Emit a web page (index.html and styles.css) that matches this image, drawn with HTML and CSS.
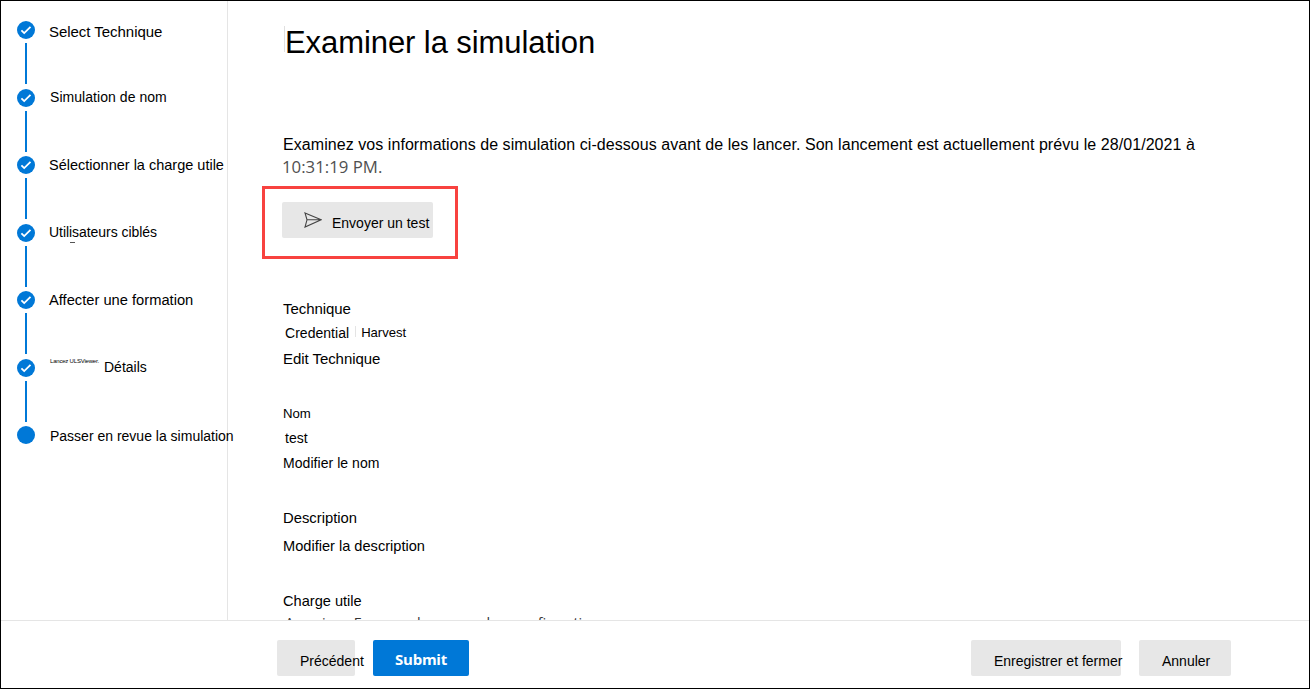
FILE: index.html
```html
<!DOCTYPE html>
<html lang="fr">
<head>
<meta charset="utf-8">
<title>Examiner la simulation</title>
<link rel="stylesheet" href="styles.css">
</head>
<body>
<div class="window">
  <div class="body">
    <nav class="steps">
      <div class="step"><svg class="mark" viewBox="0 0 18 18"><circle cx="9" cy="9" r="9"/><path d="M4.4 9.3l2.8 2.8 6.3-6.2"/></svg><span class="label s1">Select Technique</span></div>
      <div class="step"><svg class="mark" viewBox="0 0 18 18"><circle cx="9" cy="9" r="9"/><path d="M4.4 9.3l2.8 2.8 6.3-6.2"/></svg><span class="label s2">Simulation de nom</span></div>
      <div class="step"><svg class="mark" viewBox="0 0 18 18"><circle cx="9" cy="9" r="9"/><path d="M4.4 9.3l2.8 2.8 6.3-6.2"/></svg><span class="label s3">Sélectionner la charge utile</span></div>
      <div class="step"><svg class="mark" viewBox="0 0 18 18"><circle cx="9" cy="9" r="9"/><path d="M4.4 9.3l2.8 2.8 6.3-6.2"/></svg><span class="label s4">Utilisateurs ciblés</span><i class="dash"></i></div>
      <div class="step"><svg class="mark" viewBox="0 0 18 18"><circle cx="9" cy="9" r="9"/><path d="M4.4 9.3l2.8 2.8 6.3-6.2"/></svg><span class="label s5">Affecter une formation</span></div>
      <div class="step"><svg class="mark" viewBox="0 0 18 18"><circle cx="9" cy="9" r="9"/><path d="M4.4 9.3l2.8 2.8 6.3-6.2"/></svg><span class="tiny">Lancez ULSViewer.</span><span class="label s6">Détails</span></div>
      <div class="step last"><svg class="mark" viewBox="0 0 18 18"><circle cx="9" cy="9" r="9"/></svg><span class="label s7">Passer en revue la simulation</span></div>
    </nav>
    <main class="content">
      <h1 class="title"><span>Examiner la simulation</span></h1>
      <p class="intro"><span class="intro-main">Examinez vos informations de simulation ci-dessous avant de les lancer. Son lancement est actuellement prévu le 28/01/2021 à</span></p>
      <p class="time"><span>10:31:19 PM.</span></p>
      <div class="highlight">
        <button class="btn send"><svg class="plane" viewBox="0 0 18 16"><path d="M1 .9L17.2 7.8 1 15.1 3 7.8zM3 7.8h14"/></svg><span>Envoyer un test</span></button>
      </div>
      <section class="group technique">
        <div class="row r1"><span>Technique</span></div>
        <div class="row r2"><span class="cred">Credential</span><i class="sep"></i><span class="harv">Harvest</span></div>
        <div class="row r3"><span>Edit Technique</span></div>
      </section>
      <section class="group name">
        <div class="row r4"><span>Nom</span></div>
        <div class="row r5"><span>test</span></div>
        <div class="row r6"><span>Modifier le nom</span></div>
      </section>
      <section class="group desc">
        <div class="row r7"><span>Description</span></div>
        <div class="row r8"><span>Modifier la description</span></div>
      </section>
      <section class="group payload">
        <div class="row r9"><span>Charge utile</span></div>
        <div class="row r10"><span class="w0">American Express</span><span class="w1">base</span><span class="w2">number</span><span class="w3">confirmation</span></div>
      </section>
    </main>
  </div>
  <footer class="footer">
    <button class="btn prev"><span>Précédent</span></button>
    <button class="btn submit"><span>Submit</span></button>
    <button class="btn save"><span>Enregistrer et fermer</span></button>
    <button class="btn cancel"><span>Annuler</span></button>
  </footer>
</div>
</body>
</html>
```
FILE: styles.css
```css
* { box-sizing: border-box; }
body { margin: 0; background: #fff; color: #000; font-family: "Liberation Sans", Arial, sans-serif; font-size: 14px; }
h1, p { margin: 0; font-weight: normal; }
span { white-space: nowrap; }
.window { width: 1310px; height: 689px; border: 1px solid #000; display: flex; flex-direction: column; overflow: hidden; }
.body { display: flex; height: 619px; flex: none; overflow: hidden; }

.steps { width: 227px; flex: none; border-right: 1px solid #e5e5e5; padding: 20px 0 0 16px; }
.step { position: relative; height: 67.5px; display: flex; align-items: flex-start; background: linear-gradient(#0078d7, #0078d7) 8px 22px / 2px 41px no-repeat; }
.step.last { background: none; }
.mark { width: 18px; height: 18px; flex: none; }
.mark circle { fill: #0078d7; }
.mark path { fill: none; stroke: #fff; stroke-width: 1.8; }
.label { line-height: 18px; margin: 0 0 0 14px; }
.tiny { font-size: 6px; line-height: 6px; margin: -1px 0 0 15px; width: 49px; letter-spacing: -0.2px; }
.dash { position: absolute; left: 53px; top: 18px; width: 5px; height: 1px; background: #555; }
.s1 { font-size: 15px; margin-top: 2px; letter-spacing: -0.04px; }
.s2 { margin-left: 15px; margin-top: -1px; letter-spacing: 0.05px; }
.s3 { font-size: 14.5px; }
.s4 { margin-top: -1px; letter-spacing: -0.05px; }
.s5 { font-size: 14.7px; }
.s6 { margin-left: 5px; margin-top: -1px; }
.s7 { margin-left: 15px; margin-top: 1px; }

.content { flex: 1; padding: 20px 0 0 34px; min-width: 0; }
.title { display: flow-root; height: 42px; font-size: 31px; letter-spacing: -0.08px; padding-left: 22px; }
.title span { display: block; border-left: 1px solid #e0e0e0; height: 26px; line-height: 34px; margin: 5px 0 11px; }
.intro { margin-top: 70px; height: 22px; line-height: 23px; font-size: 16px; letter-spacing: 0.06px; padding-left: 21px; }
.time { height: 23px; line-height: 23px; font-family: "Open Sans", "Noto Sans", sans-serif; font-size: 16.8px; color: #505050; padding-left: 20px; }
.highlight { width: 196px; height: 73px; margin-top: 8px; border: 3px solid #f8423f; padding: 13px 17px; }
.btn { display: flex; align-items: center; height: 36px; padding: 0; border: 0; border-radius: 2px; background: #e7e7e7; color: #000; font: 14px "Liberation Sans", Arial, sans-serif; flex: none; }
.send { width: 151px; padding-left: 22px; }
.send span { margin: 6px 0 0 10px; }
.plane { width: 18px; height: 16px; margin-top: -1px; flex: none; fill: none; stroke: #444; stroke-width: 1.1; }
.group { padding-left: 21px; }
.row { height: 25px; line-height: 25px; display: flex; }
.technique { margin-top: 37px; }
.r1, .r3 { font-size: 15px; letter-spacing: -0.06px; }
.r2, .r5 { padding-left: 2px; }
.cred { letter-spacing: 0.03px; }
.harv { font-size: 13.1px; line-height: 24px; }
.sep { width: 1px; height: 11px; background: #e4e4e4; margin: 5px 5px 0 6px; }
.name { margin-top: 29px; }
.r4 { font-size: 13.2px; height: 26px; line-height: 27px; }
.r6 { letter-spacing: 0.05px; }
.desc { margin-top: 30px; }
.r7 { height: 28px; font-size: 14.8px; }
.r8 { font-size: 14.6px; }
.payload { margin-top: 30px; }
.r9 { font-size: 14.6px; height: 24px; }
.r10 { font-family: "Open Sans", "Noto Sans", sans-serif; font-size: 14.4px; line-height: 19px; color: #333; padding-left: 2px; }
.w0 { letter-spacing: 0.15px; }
.w1 { margin-left: 10px; }
.w2 { margin-left: 7px; }
.w3 { margin-left: 4px; }

.footer { flex: 1; display: flex; border-top: 1px solid #e5e5e5; padding: 19px 78px 0 276px; }
.prev { width: 78px; padding-left: 23px; }
.submit { width: 96px; margin-left: 18px; justify-content: center; background: #0078d7; color: #fff; font: bold 15px "Open Sans", sans-serif; }
.submit span { padding-top: 1px; letter-spacing: -0.25px; }
.save { width: 150px; margin-left: auto; padding-left: 23px; }
.cancel { width: 92px; margin-left: 18px; padding-left: 23px; }
.prev span, .save span, .cancel span { padding-top: 6px; }
```
